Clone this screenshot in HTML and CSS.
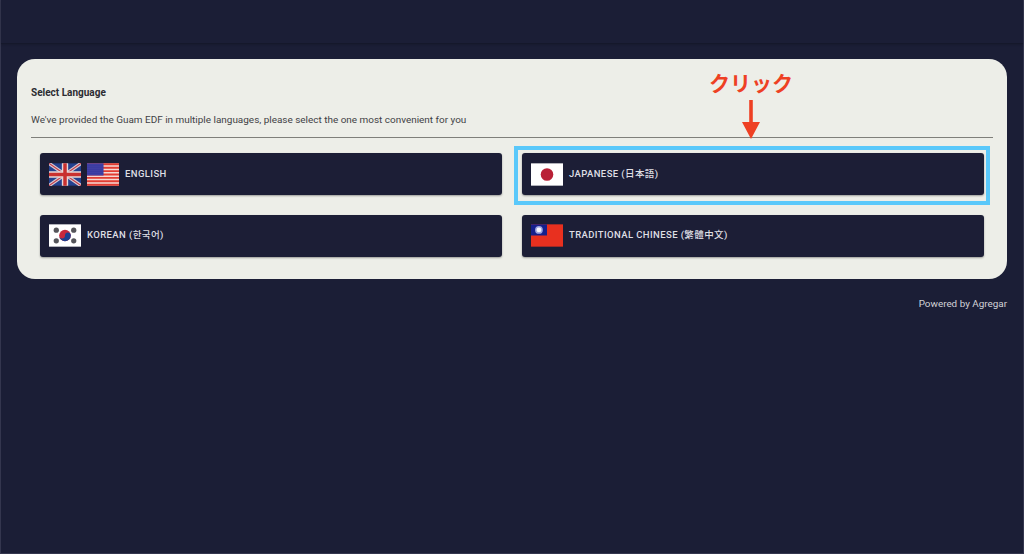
FILE: index.html
```html
<!DOCTYPE html>
<html lang="en">
<head>
  <meta charset="UTF-8" />
  <meta name="viewport" content="width=device-width, initial-scale=1.0" />
  <title>Select Language</title>
  <link rel="stylesheet" href="styles.css">
</head>
<body>
<div class="page">

  <!-- Top bar -->
  <header class="top-bar"></header>

  <main class="content">
    <section class="card">
      <h1 class="card-title">Select Language</h1>
      <p class="card-text">We've provided the Guam EDF in multiple languages, please select the one most convenient for you</p>
      <hr class="card-line" />

      <div class="lang-grid">
        <a class="lang-button" href="#">
          <svg class="flag" viewBox="0 0 33 23">
            <rect width="33" height="23" fill="#24418f"/>
            <path d="M0 0L33 23M33 0L0 23" stroke="#d9c9cf" stroke-width="3.500"/>
            <path d="M0 0L33 23M33 0L0 23" stroke="#c23b48" stroke-width="1.200"/>
            <path d="M16.500 0V23M0 11.500H33" stroke="#e6d6d6" stroke-width="6.500"/>
            <path d="M16.500 0V23M0 11.500H33" stroke="#c9302f" stroke-width="3.600"/>
          </svg>
          <svg class="flag" viewBox="0 0 33 23">
            <defs>
              <pattern id="stars" width="2" height="2" patternUnits="userSpaceOnUse">
                <circle cx="1" cy="1" r=".5" fill="#8f8fd8"/>
              </pattern>
            </defs>
            <rect width="33" height="23" fill="#f6d8d2"/>
            <path d="M0 1H33M0 4.500H33M0 8H33M0 11.500H33M0 15H33M0 18.500H33M0 22H33" stroke="#e23c32" stroke-width="2"/>
            <rect width="17" height="12.500" fill="#2a2a96"/>
            <rect width="17" height="12.500" fill="url(#stars)"/>
          </svg>
          <span>ENGLISH</span>
        </a>

        <a class="lang-button" href="#">
          <svg class="flag" viewBox="0 0 33 23">
            <rect width="33" height="23" fill="#fff"/>
            <circle cx="16.500" cy="11.500" r="6.500" fill="#b92036"/>
          </svg>
          <span>JAPANESE (日本語)</span>
        </a>

        <a class="lang-button" href="#">
          <svg class="flag" viewBox="0 0 33 23">
            <rect width="33" height="23" fill="#fff"/>
            <circle cx="16.500" cy="11.500" r="6" fill="#c8283c"/>
            <path d="M10.500 11.500a3 3 0 0 0 6 0a3 3 0 0 1 6 0a6 6 0 0 1-12 0z" fill="#1d3f8f"/>
            <g fill="#55555a">
              <circle cx="7.500" cy="6" r="2.700"/>
              <circle cx="25.500" cy="6" r="2.700"/>
              <circle cx="7.500" cy="17" r="2.700"/>
              <circle cx="25.500" cy="17" r="2.700"/>
            </g>
          </svg>
          <span>KOREAN (한국어)</span>
        </a>

        <a class="lang-button" href="#">
          <svg class="flag" viewBox="0 0 33 23">
            <rect width="33" height="23" fill="#e8301f"/>
            <rect width="16.500" height="11.500" fill="#16208c"/>
            <circle cx="8.200" cy="5.700" r="4" fill="#9da4e0"/>
            <circle cx="8.200" cy="5.700" r="2.500" fill="#f4f4fc"/>
          </svg>
          <span>TRADITIONAL CHINESE (繁體中文)</span>
        </a>
      </div>

      <!-- Annotation over the page -->
      <div class="note">
        <span class="note-label">クリック</span>
        <svg class="note-arrow" width="20" height="40" viewBox="0 0 20 40">
          <path d="M8.200 0H11.800V22H19L10 39L1 22H8.200Z" fill="#ee4023"/>
        </svg>
      </div>
      <div class="highlight"></div>
    </section>

    <p class="powered">Powered by Agregar</p>
  </main>

</div>
</body>
</html>
```

FILE: styles.css
```css
* { margin: 0; padding: 0; box-sizing: border-box; }
html, body {
  width: 100%;
  height: 100%;
  overflow: hidden;
  background: #1b1e36;
  font-family: Roboto, "Noto Sans CJK JP", sans-serif;
}

.page {
  height: 100%;
  border: 1px solid #34364e;
  border-top: 0;
}

.top-bar {
  height: 44px;
  background: #1b1e36;
  border-bottom: 1px solid #15182b;
  box-shadow: 0 1px 2px rgba(0,0,0,0.15);
}

.content {
  padding: 15px 16px 0;
}

.card {
  position: relative;
  height: 220px;
  padding: 28px 14px 0;
  background: #edeee8;
  border-radius: 18px;
}

.card-title {
  font-size: 10px;
  line-height: 12px;
  font-weight: 700;
  color: #2c2c32;
}

.card-text {
  margin-top: 15px;
  font-size: 9.950px;
  line-height: 12px;
  color: #3f3f45;
}

.card-line {
  margin-top: 11px;
  height: 1px;
  border: 0;
  background: #7f7f7a;
}

.lang-grid {
  display: grid;
  grid-template-columns: 1fr 1fr;
  gap: 19.500px 20px;
  margin-top: 15px;
  padding: 0 9px;
}

.lang-button {
  display: flex;
  align-items: center;
  gap: 6px;
  height: 42px;
  padding: 0 9px;
  background: #1c1e36;
  border-radius: 3px;
  box-shadow: 0 1px 2px rgba(0,0,0,0.35);
  color: #dfdfe4;
  font-size: 9.500px;
  line-height: 12px;
  font-weight: 500;
  letter-spacing: 0.4px;
  text-decoration: none;
}

.lang-button span { margin-bottom: 1px; }

.flag {
  width: 32px;
  height: 23px;
  flex-shrink: 0;
}

.note {
  position: absolute;
  top: 12px;
  left: 692px;
  display: flex;
  flex-direction: column;
  align-items: center;
  width: 84px;
}

.note-label {
  font-size: 21px;
  line-height: 26px;
  font-weight: 700;
  color: #ee4023;
  white-space: nowrap;
}

.note-arrow {
  margin-top: 3px;
}

.highlight {
  position: absolute;
  top: 87px;
  left: 497px;
  width: 476px;
  height: 59px;
  border: 4px solid #5ac8fa;
}

.powered {
  margin-top: 19px;
  text-align: right;
  font-size: 9.900px;
  line-height: 12px;
  color: #d2d3d8;
}
```
